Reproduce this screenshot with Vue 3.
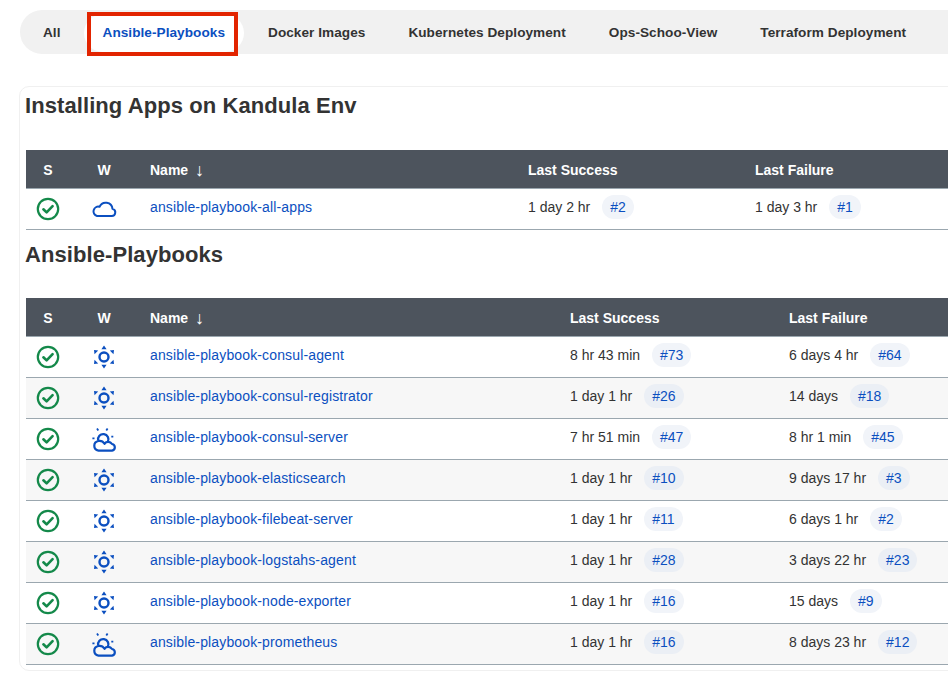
<template>
  <div class="page">
    <div class="tabs-wrap">
      <nav class="tabs">
        <a v-for="tab in tabs" :key="tab" class="tab" :class="{ active: tab === 'Ansible-Playbooks' }">{{ tab }}</a>
      </nav>
      <div class="highlight"></div>
    </div>

    <div class="panel">
      <section v-for="group in groups" :key="group.title" class="group" :class="group.cls">
        <h2>{{ group.title }}</h2>
        <table class="jobs">
          <colgroup>
            <col class="c-s" /><col class="c-w" /><col class="c-name" /><col class="c-ok" /><col class="c-fail" />
          </colgroup>
          <thead>
            <tr>
              <th class="center">S</th>
              <th class="center">W</th>
              <th>Name <span class="arrow">↓</span></th>
              <th>Last Success</th>
              <th>Last Failure</th>
            </tr>
          </thead>
          <tbody>
            <tr v-for="job in group.jobs" :key="job.name">
              <td class="center">
                <svg class="ico" width="24" height="24" viewBox="0 0 24 24">
                  <circle cx="12" cy="12" r="10.2" fill="none" stroke="#14894a" stroke-width="2.2" />
                  <path d="M7.4 12.3l3.2 3.1 6-6.2" fill="none" stroke="#14894a" stroke-width="2.6" stroke-linecap="round" stroke-linejoin="round" />
                </svg>
              </td>
              <td class="center">
                <svg v-if="job.weather === 'cloud'" class="ico" width="26" height="24" viewBox="0 0 26 24">
                  <path d="M6 19H20.500a3.600 3.600 0 0 0 1-7.100A6.800 6.800 0 0 0 8.500 9.800 4.700 4.700 0 0 0 6 19z" fill="none" stroke="#0b4fc0" stroke-width="2" stroke-linejoin="round" />
                </svg>
                <svg v-else-if="job.weather === 'sun'" class="ico" width="26" height="26" viewBox="0 0 26 26">
                  <circle cx="13" cy="13" r="4.500" fill="none" stroke="#0b4fc0" stroke-width="2.400" />
                  <path d="M13 1.500l2.600 3.800h-5.200zM13 24.500l-2.600-3.800h5.200zM3 5.900l4.200.5-3.700 3.800zM23 5.900l-4.200.5 3.700 3.800zM3 20.100l.5-4.300 3.700 3.800zM23 20.100l-.5-4.300-3.700 3.800z" fill="#0b4fc0" />
                </svg>
                <svg v-else class="ico" width="26" height="26" viewBox="0 0 26 26">
                  <path d="M7.200 14.500A5.200 5.200 0 1 1 16.800 15.800" fill="none" stroke="#0b4fc0" stroke-width="2.300" />
                  <path d="M7.500 24.700A4.900 4.900 0 0 1 7.500 15 6 6 0 0 1 13.500 17.800 4.500 4.500 0 0 1 21 18 3.400 3.400 0 0 1 21 24.700z" fill="none" stroke="#0b4fc0" stroke-width="2.200" stroke-linejoin="round" />
                  <path d="M6 2.600l1.300 1.900M16.600 2.600l-1.300 1.900M1.400 12.300h2.100M22.300 10.700h-2" fill="none" stroke="#0b4fc0" stroke-width="1.800" />
                </svg>
              </td>
              <td><a class="job-link">{{ job.name }}</a></td>
              <td>{{ job.ok[0] }}<span class="build">{{ job.ok[1] }}</span></td>
              <td>{{ job.fail[0] }}<span class="build">{{ job.fail[1] }}</span></td>
            </tr>
          </tbody>
        </table>
      </section>
    </div>
  </div>
</template>

<script setup>
const tabs = ['All', 'Ansible-Playbooks', 'Docker Images', 'Kubernetes Deployment', 'Ops-Schoo-View', 'Terraform Deployment']

const groups = [
  {
    title: 'Installing Apps on Kandula Env',
    cls: 'first',
    jobs: [
      { name: 'ansible-playbook-all-apps', weather: 'cloud', ok: ['1 day 2 hr', '#2'], fail: ['1 day 3 hr', '#1'] }
    ]
  },
  {
    title: 'Ansible-Playbooks',
    cls: 'second',
    jobs: [
      { name: 'ansible-playbook-consul-agent', weather: 'sun', ok: ['8 hr 43 min', '#73'], fail: ['6 days 4 hr', '#64'] },
      { name: 'ansible-playbook-consul-registrator', weather: 'sun', ok: ['1 day 1 hr', '#26'], fail: ['14 days', '#18'] },
      { name: 'ansible-playbook-consul-server', weather: 'partly', ok: ['7 hr 51 min', '#47'], fail: ['8 hr 1 min', '#45'] },
      { name: 'ansible-playbook-elasticsearch', weather: 'sun', ok: ['1 day 1 hr', '#10'], fail: ['9 days 17 hr', '#3'] },
      { name: 'ansible-playbook-filebeat-server', weather: 'sun', ok: ['1 day 1 hr', '#11'], fail: ['6 days 1 hr', '#2'] },
      { name: 'ansible-playbook-logstahs-agent', weather: 'sun', ok: ['1 day 1 hr', '#28'], fail: ['3 days 22 hr', '#23'] },
      { name: 'ansible-playbook-node-exporter', weather: 'sun', ok: ['1 day 1 hr', '#16'], fail: ['15 days', '#9'] },
      { name: 'ansible-playbook-prometheus', weather: 'partly', ok: ['1 day 1 hr', '#16'], fail: ['8 days 23 hr', '#12'] }
    ]
  }
]
</script>

<style>
html, body { background: #fff; overflow: hidden; }
</style>

<style scoped>
.page {
  width: 948px;
  height: 685px;
  overflow: hidden;
  font-family: "Liberation Sans", Arial, sans-serif;
  font-size: 14px;
  color: #333;
  padding: 10px 0 0 20px;
  box-sizing: border-box;
}
.tabs-wrap { position: relative; width: 1000px; }
.tabs {
  display: flex;
  align-items: center;
  height: 44px;
  box-sizing: border-box;
  background: #f1f1f1;
  border-radius: 22px;
  padding: 2px 0 0 4px;
}
.tab {
  font-size: 13.6px;
  font-weight: 700;
  letter-spacing: 0.05px;
  color: #333;
  padding: 0 19px;
  line-height: 38px;
  border-radius: 19px;
  margin-right: 5px;
  white-space: nowrap;
}
.tab:first-child { margin-right: 4px; }
.tab.active { background: #fff; color: #0b4fc0; }
.highlight {
  position: absolute;
  left: 67px;
  top: 2px;
  width: 151px;
  height: 44px;
  box-sizing: border-box;
  border: 4px solid #e22400;
}
.panel {
  margin: 32px 0 0 -1px;
  width: 1000px;
  height: 585px;
  box-sizing: border-box;
  border: 1px solid #f0f0f0;
  border-radius: 10px;
  padding-left: 5px;
}
h2 {
  margin: 0;
  font-size: 22px;
  line-height: 28px;
  font-weight: 700;
  letter-spacing: 0.08px;
  color: #333;
}
.first h2 { padding-top: 5px; margin-bottom: 30px; }
.second h2 { padding-top: 11px; margin-bottom: 29px; }
.jobs {
  border-collapse: collapse;
  table-layout: fixed;
  width: 960px;
  margin-left: 1px;
}
.c-s { width: 44px; }
.c-w { width: 68px; }
.first .c-name { width: 378px; }
.first .c-ok { width: 227px; }
.second .c-name { width: 420px; }
.second .c-ok { width: 219px; }
th {
  height: 36px;
  padding: 2px 12px 0;
  background: #4d545d;
  color: #fff;
  font-size: 14px;
  font-weight: 700;
  text-align: left;
  border-bottom: 1px solid #9ba7af;
  box-sizing: content-box;
}
th.center { text-align: center; padding: 2px 0 0; }
td.center { text-align: center; padding: 0; height: 40px; }
.arrow { font-weight: 400; font-size: 18px; margin-left: 3px; line-height: 0; vertical-align: -1px; }
td {
  height: 36px;
  padding: 0 12px 4px;
  border-bottom: 1px solid #9ba7af;
  white-space: nowrap;
  box-sizing: content-box;
}
tbody tr:nth-child(even) td { background: #f7f7f7; }
.ico { display: block; margin: 0 auto; }
.job-link { color: #0b4fc0; letter-spacing: 0.14px; }
.build {
  display: inline-block;
  margin-left: 12px;
  padding: 0 8px;
  line-height: 24px;
  border-radius: 12px;
  background: #f1f4f9;
  color: #0b4fc0;
}
tbody tr:nth-child(even) .build { background: #ebeff5; }
</style>
